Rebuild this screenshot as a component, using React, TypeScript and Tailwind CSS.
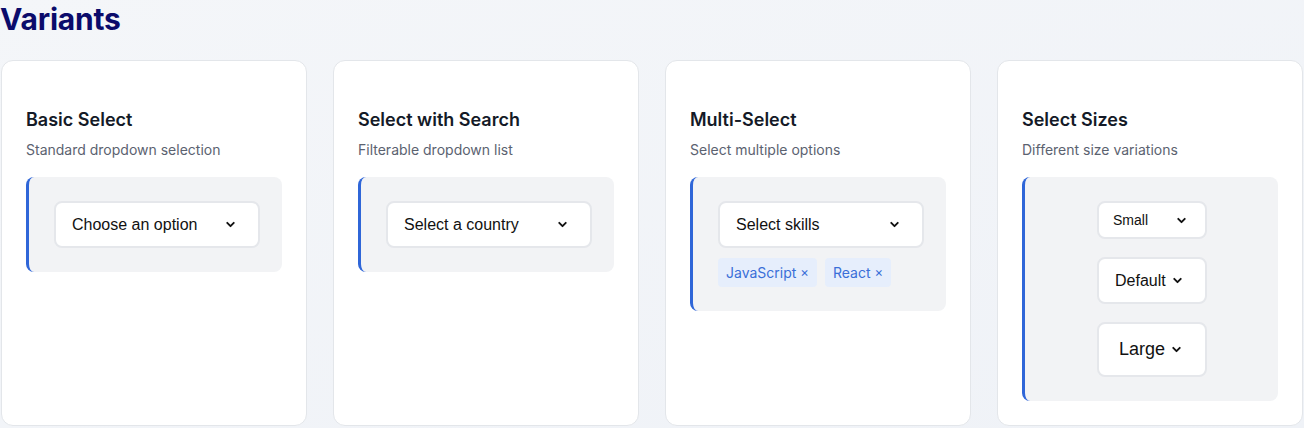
import { ChevronDown } from 'lucide-react'

type Size = 'sm' | 'md' | 'lg'

function FakeSelect({
  label,
  size = 'md',
  wide = true,
}: {
  label: string
  size?: Size
  wide?: boolean
}) {
  const sizing =
    size === 'sm'
      ? 'h-[38px] pl-[14px] pr-[17px] text-[14px]'
      : size === 'lg'
        ? 'h-[55px] pl-[20px] pr-[24px] text-[18px]'
        : 'h-[47px] pl-[16px] pr-[21px] text-[16px]'
  const width = wide ? 'w-[206px] pl-[16px]' : 'w-[110px]'

  return (
    <div
      className={`flex shrink-0 items-center justify-between gap-[5px] rounded-lg border-2 border-[#e5e7eb] bg-white text-[#111] ${sizing} ${width}`}
      style={{ fontFamily: '"Liberation Sans", Arial, sans-serif' }}
    >
      <span className="whitespace-nowrap">{label}</span>
      <ChevronDown className="h-[13px] w-[13px] shrink-0" strokeWidth={3.5} />
    </div>
  )
}

function Tag({ label }: { label: string }) {
  return (
    <span className="inline-flex h-[29px] items-center gap-1 rounded bg-[#e6eefc] px-2 text-[14px] text-[#3a6fd8]">
      {label}
      <span className="text-[13px] leading-none">×</span>
    </span>
  )
}

function DemoBox({ children, center = false }: { children: React.ReactNode; center?: boolean }) {
  return (
    <div
      className={`rounded-lg border-l-[3px] border-[#2f66d8] bg-[#f2f3f5] py-6 pl-[25px] pr-6 ${
        center ? 'flex flex-col items-center gap-[18px]' : ''
      }`}
    >
      {children}
    </div>
  )
}

function Card({
  title,
  subtitle,
  children,
}: {
  title: string
  subtitle: string
  children: React.ReactNode
}) {
  return (
    <div className="rounded-xl border border-[#e3e6ea] bg-white px-6 pb-6 pt-[47px]">
      <h3 className="text-[18px] font-semibold leading-6 text-[#141a27]">{title}</h3>
      <p className="mt-[8px] text-[14px] leading-5 text-[#5b6270]">{subtitle}</p>
      <div className="mt-[17px]">{children}</div>
    </div>
  )
}

export default function App() {
  return (
    <div
      className="min-h-screen bg-gradient-to-br from-[#f4f6f9] to-[#eff2f7]"
      style={{ fontFamily: 'Inter, "Noto Sans", sans-serif' }}
    >
      <h1 className="text-[30px] font-bold leading-[38px] tracking-[-0.2px] text-[#0b0b6b]">
        Variants
      </h1>

      <div className="mt-[22px] grid grid-cols-4 items-stretch gap-[26px] px-px">
        <Card title="Basic Select" subtitle="Standard dropdown selection">
          <DemoBox>
            <FakeSelect label="Choose an option" />
          </DemoBox>
        </Card>

        <Card title="Select with Search" subtitle="Filterable dropdown list">
          <DemoBox>
            <FakeSelect label="Select a country" />
          </DemoBox>
        </Card>

        <Card title="Multi-Select" subtitle="Select multiple options">
          <DemoBox>
            <FakeSelect label="Select skills" />
            <div className="mt-[10px] flex gap-2">
              <Tag label="JavaScript" />
              <Tag label="React" />
            </div>
          </DemoBox>
        </Card>

        <Card title="Select Sizes" subtitle="Different size variations">
          <DemoBox center>
            <FakeSelect label="Small" size="sm" wide={false} />
            <FakeSelect label="Default" size="md" wide={false} />
            <FakeSelect label="Large" size="lg" wide={false} />
          </DemoBox>
        </Card>
      </div>
    </div>
  )
}
